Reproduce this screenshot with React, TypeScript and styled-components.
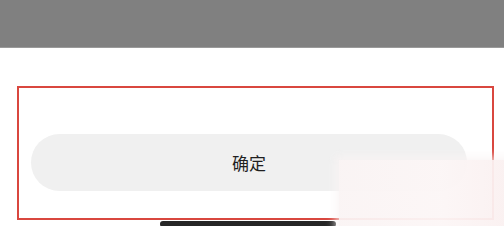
import React from 'react';
import styled, { createGlobalStyle } from 'styled-components';

const GlobalStyle = createGlobalStyle`
  html, body {
    margin: 0;
    padding: 0;
    background: #ffffff;
  }
  body {
    font-family: "Noto Sans CJK SC", "Noto Sans", sans-serif;
  }
`;

const Page = styled.div`
  position: relative;
  width: 504px;
  height: 226px;
  overflow: hidden;
  background: #ffffff;
`;

const Mask = styled.div`
  height: 48px;
  background-color: #808080;
  border-bottom: 1px solid #9a9a9a;
  box-sizing: border-box;
`;

const Frame = styled.div`
  margin: 38px 10px 0 17px;
  height: 134px;
  box-sizing: border-box;
  border: 2px solid #d9473f;
  padding: 46px 25px 0 12px;
`;

const ConfirmButton = styled.button`
  display: flex;
  align-items: center;
  justify-content: center;
  width: 100%;
  height: 57px;
  border: none;
  border-radius: 29px;
  background-color: #f0f0f0;
  color: #1f1f1f;
  font-family: "Noto Sans CJK SC", "Noto Sans", sans-serif;
  font-size: 17px;
  padding: 0;
  cursor: pointer;
`;

const HomeIndicator = styled.div`
  width: 176px;
  height: 6px;
  margin: 1px 0 0 160px;
  border-radius: 3px;
  background-color: #262626;
`;

const Glare = styled.div`
  position: absolute;
  left: 339px;
  top: 160px;
  width: 170px;
  height: 70px;
  background: linear-gradient(90deg, rgba(250, 244, 244, 0.94), rgba(252, 246, 246, 0.96) 60%, rgba(250, 240, 240, 0.95));
  box-shadow: 0 0 8px 4px rgba(250, 244, 244, 0.7);
`;

export default function App() {
  return (
    <>
      <GlobalStyle />
      <Page>
        <Mask />
        <Frame>
          <ConfirmButton>确定</ConfirmButton>
        </Frame>
        <HomeIndicator />
        <Glare />
      </Page>
    </>
  );
}
